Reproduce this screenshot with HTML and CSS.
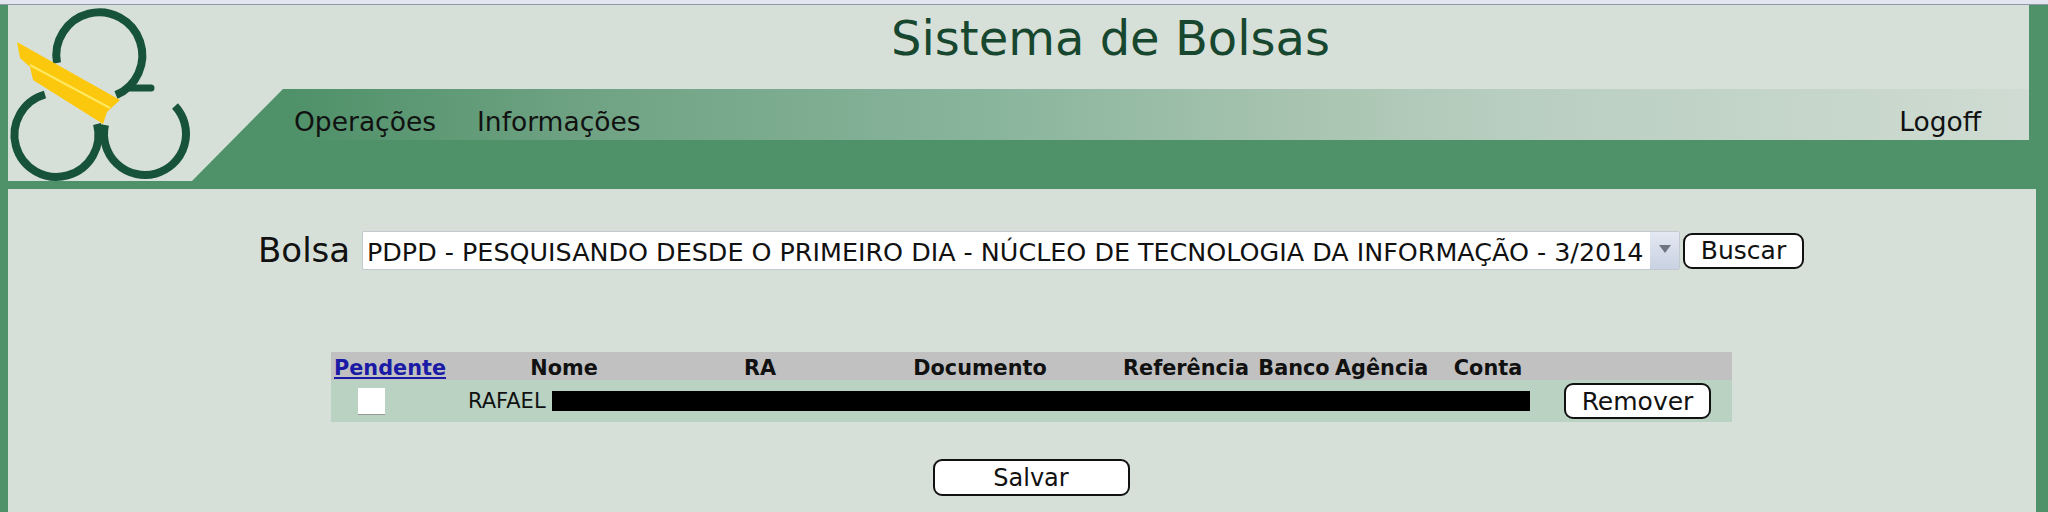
FILE: index.html
```html
<!DOCTYPE html>
<html lang="pt-BR">
<head>
    <meta charset="UTF-8">
    <title>Sistema de Bolsas</title>
    <link rel="stylesheet" href="styles.css">
</head>
<body>
    <div class="top-strip"></div>
    <div class="page">
        <div class="header">
            <svg class="logo" width="200" height="185" viewBox="0 0 200 185">
                <g fill="none" stroke="#17523a" stroke-width="8">
                    <path d="M57 63 A43 43 0 1 1 116 95"/>
                    <path d="M128 88 L151 88" stroke-width="7" stroke-linecap="round"/>
                    <path d="M45 94.5 A42 42 0 1 0 97 124"/>
                    <path d="M175 106 A41 41 0 1 1 105 125"/>
                </g>
                <polygon fill="#fcc80d" points="17,42 120,100 107,112 103,124 33,80 30,67 20,58"/>
                <path d="M30 65 L110 108" stroke="#ffe860" stroke-width="2"/>
            </svg>
            <h1 class="titulo">Sistema de Bolsas</h1>
            <div class="banner">
                <div class="menu">
                    <a href="#">Operações</a>
                    <a href="#">Informações</a>
                    <a href="#" class="logoff">Logoff</a>
                </div>
                <div class="faixa"></div>
            </div>
        </div>

        <div class="conteudo">
            <form class="busca">
                <label for="bolsa">Bolsa</label>
                <div class="select-box">
                    <select id="bolsa" name="bolsa">
                        <option>PDPD - PESQUISANDO DESDE O PRIMEIRO DIA - NÚCLEO DE TECNOLOGIA DA INFORMAÇÃO - 3/2014</option>
                    </select>
                    <span class="seta"></span>
                </div>
                <button type="button" class="btn btn-buscar">Buscar</button>
            </form>

            <table class="tabela">
                <colgroup>
                    <col class="c-pendente">
                    <col class="c-nome">
                    <col class="c-ra">
                    <col class="c-doc">
                    <col class="c-ref">
                    <col class="c-banco">
                    <col class="c-agencia">
                    <col class="c-conta">
                    <col>
                </colgroup>
                <thead>
                    <tr>
                        <th><a href="#">Pendente</a></th>
                        <th>Nome</th>
                        <th>RA</th>
                        <th>Documento</th>
                        <th>Referência</th>
                        <th>Banco</th>
                        <th>Agência</th>
                        <th>Conta</th>
                        <th></th>
                    </tr>
                </thead>
                <tbody>
                    <tr>
                        <td class="centro"><input type="checkbox" class="check"></td>
                        <td colspan="7" class="nome">RAFAEL <span class="tarja"></span></td>
                        <td class="centro"><button type="button" class="btn btn-remover">Remover</button></td>
                    </tr>
                </tbody>
            </table>

            <div class="acoes">
                <button type="button" class="btn btn-salvar">Salvar</button>
            </div>
        </div>
    </div>
</body>
</html>
```

FILE: styles.css
```css
body {
    margin: 0;
    font-family: "DejaVu Sans", Verdana, sans-serif;
    background-color: #d7e0d8;
    color: #111;
}

.top-strip {
    height: 5px;
    background-color: #e3e6f1;
    border-bottom: 1px solid #8f96a8;
    box-sizing: border-box;
}

.page {
    border-left: 8px solid #4f9169;
    height: 507px;
    box-sizing: border-box;
}

/* cabecalho */
.header {
    position: relative;
    height: 184px;
    border-right: 19px solid #4f9169;
}

.logo {
    position: absolute;
    left: -8px;
    top: -5px;
}

.titulo {
    margin: 0;
    height: 84px;
    padding: 3px 0 0 184px;
    box-sizing: border-box;
    text-align: center;
    font-size: 48px;
    line-height: 60px;
    font-weight: normal;
    color: #17472f;
}

.banner {
    height: 100px;
    clip-path: polygon(275px 0, 100% 0, 100% 100%, 0 100%, 0 92px, 184px 92px);
}

.menu {
    height: 51px;
    box-sizing: border-box;
    display: flex;
    align-items: center;
    gap: 41px;
    padding: 14px 48px 0 286px;
    font-size: 26.5px;
    background: linear-gradient(to right, #4f9169 14%, #70a384 29%, #8ab59d 49%, #a8c4b0 64%, #b8cec0 74%, #cad8ce 94%, #d0dcd3 100%);
}

.menu a {
    color: #111;
    text-decoration: none;
}

.logoff {
    margin-left: auto;
}

.faixa {
    height: 49px;
    background-color: #4f9169;
}

/* conteudo */
.conteudo {
    height: 323px;
    border-right: 12px solid #4f9169;
}

.busca {
    display: flex;
    align-items: center;
    padding: 42px 0 0 250px;
}

.busca label {
    font-size: 34px;
    width: 104px;
    margin-top: -2px;
}

.select-box {
    position: relative;
    width: 1318px;
    height: 39px;
}

.select-box select {
    appearance: none;
    width: 100%;
    height: 100%;
    padding: 3px 30px 0 4px;
    font-family: "DejaVu Sans", Verdana, sans-serif;
    font-size: 25.4px;
    color: #111;
    background-color: #fff;
    border: 1px solid #c4c9cf;
    border-radius: 2px;
}

.seta {
    position: absolute;
    top: 1px;
    right: 1px;
    bottom: 1px;
    width: 29px;
    background: linear-gradient(#e3e8f2, #c9d2e2);
    pointer-events: none;
}

.seta::after {
    content: "";
    position: absolute;
    left: 9px;
    top: 13px;
    border-left: 6px solid transparent;
    border-right: 6px solid transparent;
    border-top: 8px solid #6f7680;
}

.btn {
    font-family: "DejaVu Sans", Verdana, sans-serif;
    font-size: 25px;
    color: #111;
    background-color: #fff;
    border: 2px solid #111;
    border-radius: 9px;
    padding: 0;
    box-sizing: border-box;
}

.btn-buscar {
    margin-left: 3px;
    width: 121px;
    height: 36px;
}

.tabela {
    border-collapse: collapse;
    table-layout: fixed;
    width: 1401px;
    margin: 82px 0 0 323px;
}

.c-pendente { width: 118px; }
.c-nome { width: 230px; }
.c-ra { width: 162px; }
.c-doc { width: 278px; }
.c-ref { width: 134px; }
.c-banco { width: 82px; }
.c-agencia { width: 93px; }
.c-conta { width: 120px; }

.tabela th {
    height: 28px;
    padding: 3px 0 0;
    box-sizing: border-box;
    font-size: 20.8px;
    background-color: #c1c1c1;
    color: #111;
    text-align: center;
    white-space: nowrap;
}

.tabela th a {
    color: #1a1aa6;
}

.tabela td {
    height: 42px;
    padding: 0;
    background-color: #b9d2c2;
}

.centro {
    text-align: center;
}

.check {
    appearance: none;
    display: block;
    width: 27px;
    height: 27px;
    margin: 0 0 0 27px;
    background-color: #fff;
    border-bottom: 1px solid #999;
    box-sizing: border-box;
}

.nome {
    font-size: 21px;
    padding-left: 19px !important;
    white-space: nowrap;
}

.tarja {
    display: inline-block;
    width: 978px;
    height: 20px;
    background-color: #000;
    vertical-align: -3px;
}

.btn-remover {
    display: block;
    margin-left: 16px;
    width: 147px;
    height: 36px;
}

.acoes {
    text-align: center;
    margin-top: 37px;
    padding-left: 18px;
}

.btn-salvar {
    width: 197px;
    height: 37px;
    font-size: 24px;
}
```
